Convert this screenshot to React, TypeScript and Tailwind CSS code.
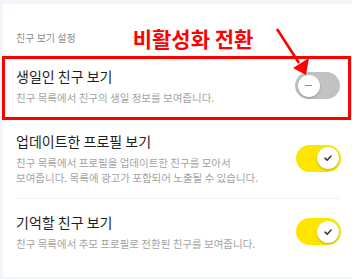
const font = '[font-family:"Noto_Sans_CJK_KR","Noto_Sans",sans-serif]'

function Toggle({ on }: { on: boolean }) {
  return (
    <div
      className={
        'flex h-[27px] w-[45px] shrink-0 items-center rounded-full px-[2.5px] ' +
        (on ? 'justify-end bg-[#fee500]' : 'justify-start bg-[#c2c2c2]')
      }
    >
      <div className="flex h-[22px] w-[22px] items-center justify-center rounded-full bg-white shadow-[0_1px_2px_rgba(0,0,0,0.25)]">
        {on ? (
          <svg width="10" height="10" viewBox="0 0 10 10">
            <path d="M2 5.2 L4.2 7.2 L8 3" fill="none" stroke="#3a3a3a" strokeWidth="1.6" strokeLinecap="round" strokeLinejoin="round" />
          </svg>
        ) : (
          <div className="h-[1.5px] w-[7px] rounded bg-[#8a8a8a]" />
        )}
      </div>
    </div>
  )
}

function SettingRow({
  title,
  desc,
  on
}: {
  title: string
  desc: React.ReactNode
  on: boolean
}) {
  return (
    <div className="flex items-center justify-between gap-3">
      <div className="flex flex-col">
        <p className="text-[14px] leading-[20px] text-[#1e1e1e]">{title}</p>
        <p className="mt-[4px] text-[10.5px] leading-[15px] text-[#a3a3a3]">{desc}</p>
      </div>
      <Toggle on={on} />
    </div>
  )
}

export default function App() {
  return (
    <div className={`relative h-[279px] w-[352px] overflow-hidden bg-[#f1f4f9] pl-[3px] pt-[4px] ${font}`}>
      <div className="flex h-[273px] flex-col bg-white">
        {/* header */}
        <div className="flex h-[52px] items-end pb-[11px] pl-[13px]">
          <p className="text-[10px] leading-[14px] text-[#8c8c8c]">친구 보기 설정</p>
          <p className="mb-[-6px] ml-[57px] text-[21px] font-bold leading-[26px] text-[#ff0000]">
            비활성화 전환
          </p>
        </div>

        {/* highlighted row */}
        <div className="ml-[-1px] w-[349px] border-[3px] border-[#ff0000] pb-[12px] pl-[11px] pr-[8px] pt-[7px]">
          <SettingRow
            title="생일인 친구 보기"
            desc="친구 목록에서 친구의 생일 정보를 보여줍니다."
            on={false}
          />
        </div>

        <div className="mx-[13px] border-b border-[#f0f0f0] pb-[13px] pt-[11px] pr-0">
          <div className="mr-[-2px]">
            <SettingRow
              title="업데이트한 프로필 보기"
              desc={
                <>
                  친구 목록에서 프로필을 업데이트한 친구를 모아서
                  <br />
                  보여줍니다. 목록에 광고가 포함되어 노출될 수 있습니다.
                </>
              }
              on={true}
            />
          </div>
        </div>

        <div className="pb-[25px] pl-[13px] pr-[11px] pt-[13px]">
          <SettingRow
            title="기억할 친구 보기"
            desc="친구 목록에서 추모 프로필로 전환된 친구를 보여줍니다."
            on={true}
          />
        </div>
      </div>

      {/* annotation arrow */}
      <svg className="absolute left-0 top-0" width="352" height="279" viewBox="0 0 352 279">
        <line x1="277" y1="29" x2="299" y2="63" stroke="#ff0000" strokeWidth="2.6" />
        <polygon points="306,75 293,68 309,58" fill="#ff0000" />
      </svg>
    </div>
  )
}
